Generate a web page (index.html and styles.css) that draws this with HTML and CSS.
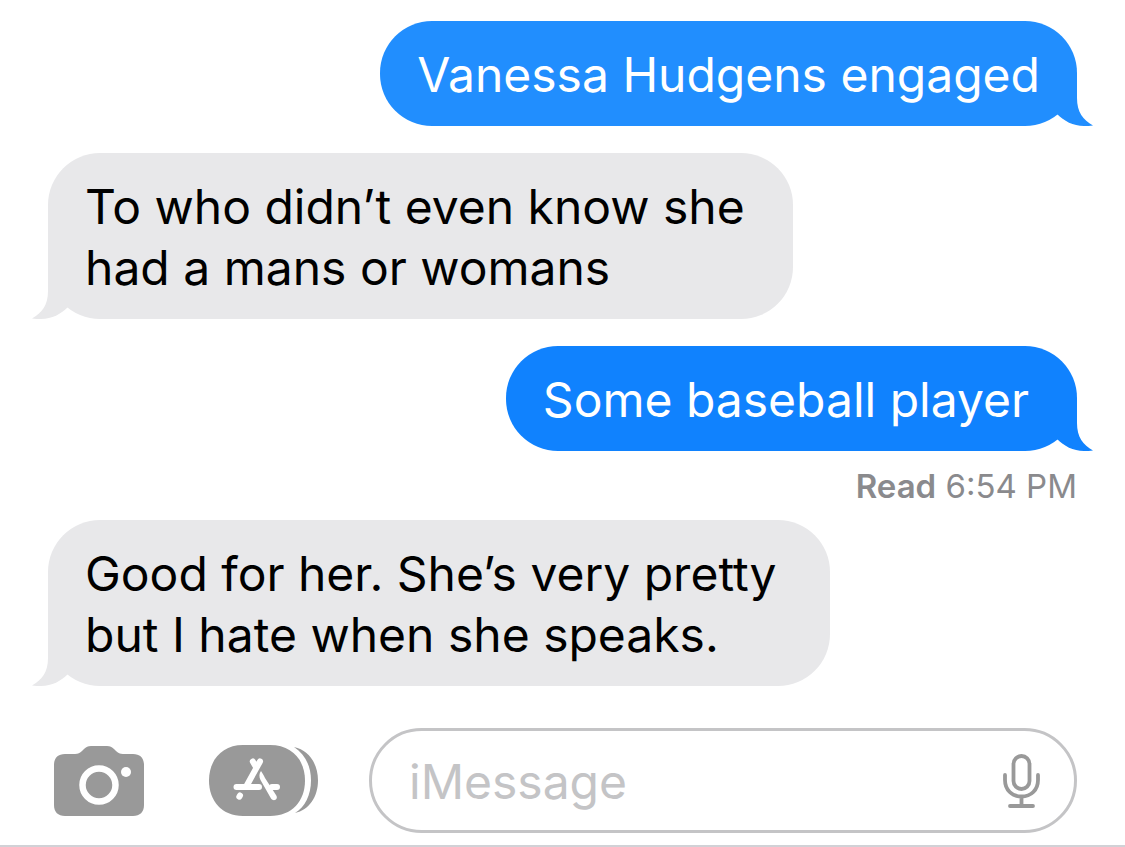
FILE: index.html
```html
<!DOCTYPE html>
<html lang="en">
<head>
<meta charset="utf-8">
<meta name="viewport" content="width=device-width, initial-scale=1">
<title>Messages</title>
<link rel="stylesheet" href="styles.css">
</head>
<body>
<svg class="defs" aria-hidden="true">
  <symbol id="tail" viewBox="0 0 36 52">
    <path d="M0 0H20V24C20 38 26 46 36 51.500C33 52 30 52 27 52C16 52 7 47 0 40Z"/>
  </symbol>
</svg>
<main class="thread">
  <p class="bubble sent sent-light">Vanessa Hudgens engaged<svg class="tail" aria-hidden="true"><use href="#tail"/></svg></p>
  <p class="bubble received roomy">To who didn’t even know she<br>had a mans or womans<svg class="tail" aria-hidden="true"><use href="#tail"/></svg></p>
  <p class="bubble sent roomy">Some baseball player<svg class="tail" aria-hidden="true"><use href="#tail"/></svg></p>
  <p class="receipt"><strong>Read</strong> 6:54 PM</p>
  <p class="bubble received roomiest">Good for her. She’s very pretty<br>but I hate when she speaks.<svg class="tail" aria-hidden="true"><use href="#tail"/></svg></p>
</main>
<form class="composer">
  <button class="tool" type="button" aria-label="Camera">
    <svg width="90" height="70" viewBox="0 0 90 70" aria-hidden="true">
      <path fill="#999" d="M11 8H21C24 8 26 7 28 5L30 3C32 1 34 0 37 0H53C56 0 58 1 60 3L62 5C64 7 66 8 69 8H79C86 8 90 12 90 19V59C90 66 86 70 79 70H11C4 70 0 66 0 59V19C0 12 4 8 11 8Z"/>
      <circle cx="45" cy="39" r="16.5" fill="none" stroke="#fff" stroke-width="6.5"/>
      <circle cx="72" cy="26" r="5" fill="#fff"/>
    </svg>
  </button>
  <button class="tool" type="button" aria-label="Apps">
    <svg width="109" height="71" viewBox="0 0 109 71" aria-hidden="true">
      <path fill="#999" d="M34 0H61C83 0 96 15 96 35.500S83 71 61 71H34C13 71 0 56 0 35.500S13 0 34 0Z"/>
      <path fill="#999" d="M85 2C100 5 109 19 109 35.500S100 65 86 68C96 62 102 50 102 35.500S96 9 85 2Z"/>
      <g fill="none" stroke="#fff" stroke-width="6" stroke-linecap="round">
        <path d="M51 16.500L37.500 41M43.800 16.500L47 22M27.500 42H50M63 42H68M31 50.500L30.300 51.700"/>
      </g>
      <path fill="#fff" d="M52 26C53.500 28 55 31 56 33L67.300 50.500C69.500 54.500 64.500 57 62 53.500L51.500 35C50 32 50 28.500 52 26Z"/>
    </svg>
  </button>
  <div class="field">
    <input class="message" type="text" placeholder="iMessage" aria-label="iMessage">
    <button class="dictate" type="button" aria-label="Dictate">
      <svg width="37" height="54" viewBox="0 0 37 54" fill="none" stroke="#999" stroke-width="3.800" stroke-linecap="round" aria-hidden="true">
        <rect x="10.500" y="2" width="16" height="33" rx="8"/>
        <path d="M2 21V26C2 36 9 42.500 18.500 42.500S35 36 35 26V21M18.500 42.500V52M7 52H30"/>
      </svg>
    </button>
  </div>
</form>
</body>
</html>
```
FILE: styles.css
```css
* { box-sizing: border-box; }

body {
  margin: 0;
  min-height: 100vh;
  display: flex;
  flex-direction: column;
  background: #fff;
  border-bottom: 2px solid #d1d1d6;
  font-family: Inter, "Liberation Sans", sans-serif;
}

.defs {
  position: absolute;
  width: 0;
  height: 0;
}

.thread {
  display: flex;
  flex-direction: column;
  gap: 27px;
  padding: 21px 48px 0;
}

.bubble {
  position: relative;
  margin: 0;
  padding: 23px 37px 21px;
  border-radius: 52px;
  font-size: 48px;
  line-height: 61px;
}

.sent {
  --bubble: #1082fe;
  align-self: flex-end;
  background: var(--bubble);
  color: #fff;
}

.sent-light { --bubble: #218efe; }

.received {
  --bubble: #e8e8ea;
  align-self: flex-start;
  background: var(--bubble);
  color: #000;
}

.roomy { padding-right: 48px; }

.roomiest { padding-right: 53px; }

.tail {
  position: absolute;
  bottom: 0;
  width: 36px;
  height: 52px;
  fill: var(--bubble);
}

.sent .tail { right: -16px; }

.received .tail {
  left: -16px;
  transform: scaleX(-1);
}

.receipt {
  align-self: flex-end;
  margin: -14px 0 -15px;
  color: #8a8a8d;
  font-size: 33px;
  line-height: 44px;
}

.receipt strong { font-weight: 600; }

.composer {
  display: flex;
  align-items: center;
  margin-top: auto;
  padding: 0 48px 12px 54px;
}

.tool,
.dictate {
  display: flex;
  padding: 0;
  border: 0;
  background: none;
}

.tool { margin-right: 65px; }

.tool + .tool { margin-right: 51px; }

.field {
  flex: 1;
  min-width: 0;
  display: flex;
  align-items: center;
  height: 105px;
  padding: 0 34px 0 37px;
  border: 3px solid #c4c4c6;
  border-radius: 53px;
}

.message {
  flex: 1;
  min-width: 0;
  padding: 2px 0 0;
  border: 0;
  outline: 0;
  background: none;
  font: inherit;
  font-size: 48px;
  line-height: 61px;
}

.message::placeholder { color: #c4c4c6; opacity: 1; }
```
